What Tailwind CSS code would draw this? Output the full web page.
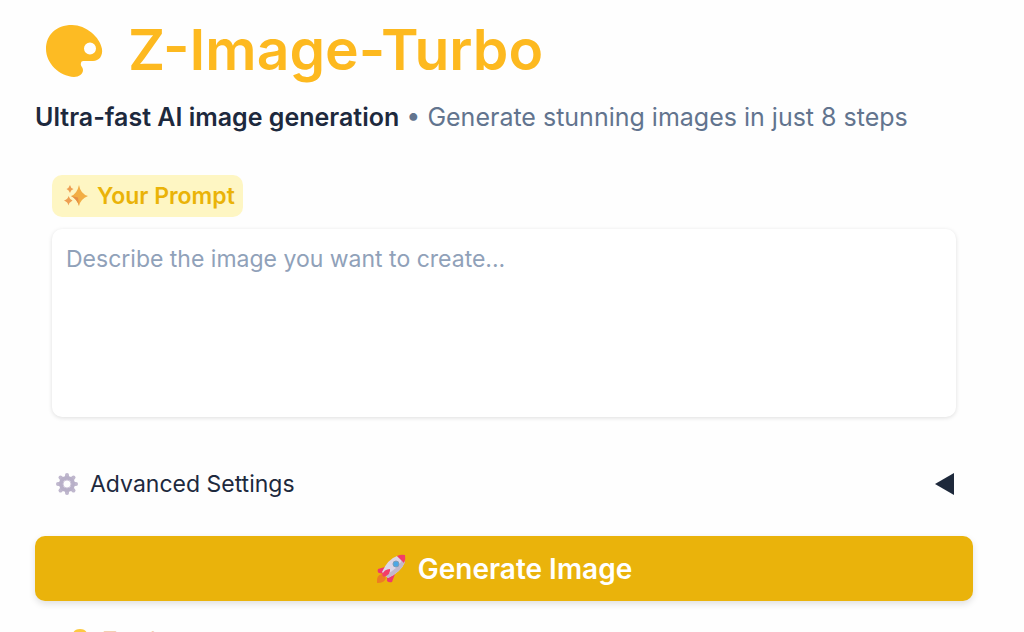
<!DOCTYPE html>
<html lang="en">
<head>
<meta charset="utf-8">
<meta name="viewport" content="width=device-width, initial-scale=1">
<title>Z-Image-Turbo</title>
<script src="https://cdn.jsdelivr.net/npm/@tailwindcss/browser@4"></script>
</head>
<body class="h-screen overflow-hidden bg-[#fefefe] font-['Inter',sans-serif] text-slate-800">
<main class="pt-4 pr-[51px] pl-[35px]">
  <header>
    <h1 class="flex items-center gap-[25px] pl-[10px] text-[57px] leading-[68px] font-semibold text-[#fdb91f]">
      <svg class="h-[54px] w-[58px] shrink-0" viewBox="0 0 58 54" aria-hidden="true"><path fill="#fdbb23" fill-rule="evenodd" d="M27 2C11 2 1 12 1 26C1 40 14 53 29 54C34 54 38 51 38 47C38 44 35 43 36 40C36 38 38 38 40 38H48C54 38 58 33 57 26C55 14 41 2 27 2ZM45 19.500A6 6 0 1 1 45 31.500A6 6 0 1 1 45 19.500Z"/></svg>
      <span>Z-Image-Turbo</span>
    </h1>
    <p class="mt-[15px] text-[25px] leading-9 text-slate-500"><strong class="font-semibold text-slate-800">Ultra-fast AI image generation</strong> • Generate stunning images in just 8 steps</p>
  </header>

  <section class="mt-10 px-[17px]">
    <label for="prompt" class="inline-flex h-[42px] items-center gap-[9px] rounded-[10px] bg-[#fef6c3] pr-2 pl-3 align-top text-[23px] font-semibold text-[#eab308]">
      <svg class="size-6" viewBox="0 0 24 24" aria-hidden="true"><path fill="#f2ae45" d="M15 1Q16.500 10 24 12Q16.500 15 15 22Q13 15 7 12Q13 10 15 1Z"/><path fill="#e58f45" d="M15 22Q13 15 7 12L14 13.500Z"/><path fill="#ee9f52" d="M6 1Q6.500 4 9.500 5Q6.500 6 6 9Q5 6 2.500 5Q5 4 6 1ZM4.500 12Q5.500 15 8.500 16.500Q5.500 18 4.500 21.500Q4 18 0 16.500Q4 15 4.500 12Z"/></svg>
      Your Prompt
    </label>
    <textarea id="prompt" placeholder="Describe the image you want to create..." class="mt-3 block h-[188px] w-full resize-none rounded-[10px] bg-white px-[14px] py-[14px] text-[23px] leading-8 shadow-[0_1px_4px_rgba(0,0,0,0.13)] outline-none placeholder:text-slate-400"></textarea>
  </section>

  <button type="button" aria-expanded="false" class="mt-[49px] flex w-full items-center justify-between pr-[19px] pl-5 text-[23px] leading-9">
    <span class="flex items-center gap-[11px]">
      <svg class="size-6" viewBox="-12 -12 24 24" aria-hidden="true"><g stroke="#bfb7cd" stroke-width="4" stroke-linecap="round"><path d="M0-6V-9M0 6V9M-6 0H-9M6 0H9M-4-4L-6.500-6.500M4-4L6.500-6.500M-4 4L-6.500 6.500M4 4L6.500 6.500"/></g><circle r="6" fill="none" stroke="#b8b0c8" stroke-width="4"/><circle r="4" fill="#fefefe" stroke="#cdc5d8"/></svg>
      Advanced Settings
    </span>
    <svg class="h-[22px] w-[19px]" viewBox="0 0 19 22" aria-hidden="true"><path fill="#1e293b" d="M19 0V22L0 11Z"/></svg>
  </button>

  <button type="button" class="mt-[34px] flex h-[65px] w-full items-center justify-center gap-3 rounded-[10px] bg-[#eab30b] text-[28px] font-semibold text-white shadow-[0_3px_7px_rgba(0,0,0,0.12)]">
    <svg class="size-[30px]" viewBox="0 0 30 30" aria-hidden="true"><path fill="#ee7d22" d="M1 29Q0 21 6 20L10 24Q9 29 1 29Z"/><path fill="#f0396c" d="M9 13L2 15Q1 18 3 19L8 20ZM19 20L16 28Q13 29 11 27L11 20Z"/><path fill="#ded6e6" d="M21 2Q12 5 6 18L12 24Q25 18 29 8Z"/><path fill="#c3b8cb" d="M12 24Q25 18 29 8L26 6Q22 15 9 21Z"/><path fill="#f33c68" d="M21 2Q25 0 29 1Q30 5 28 9ZM6 21Q8 15 14 15Q15 20 8 23Z"/><circle cx="20" cy="10" r="3" fill="#4da7e5" stroke="#7f9db5"/></svg>
    Generate Image
  </button>

  <p class="mt-[22px] flex items-center gap-3 pl-[34px] text-[22px] leading-8 text-[#f3cfb0]">
    <svg class="size-[22px]" viewBox="0 0 24 24" aria-hidden="true"><path fill="#fdc940" d="M12 1Q20 1 20 9Q20 13 16 17H8Q4 13 4 9Q4 1 12 1Z"/><path fill="#8e9aa8" d="M8 18H16V22H8Z"/></svg>
    Try these
  </p>
</main>
</body>
</html>
